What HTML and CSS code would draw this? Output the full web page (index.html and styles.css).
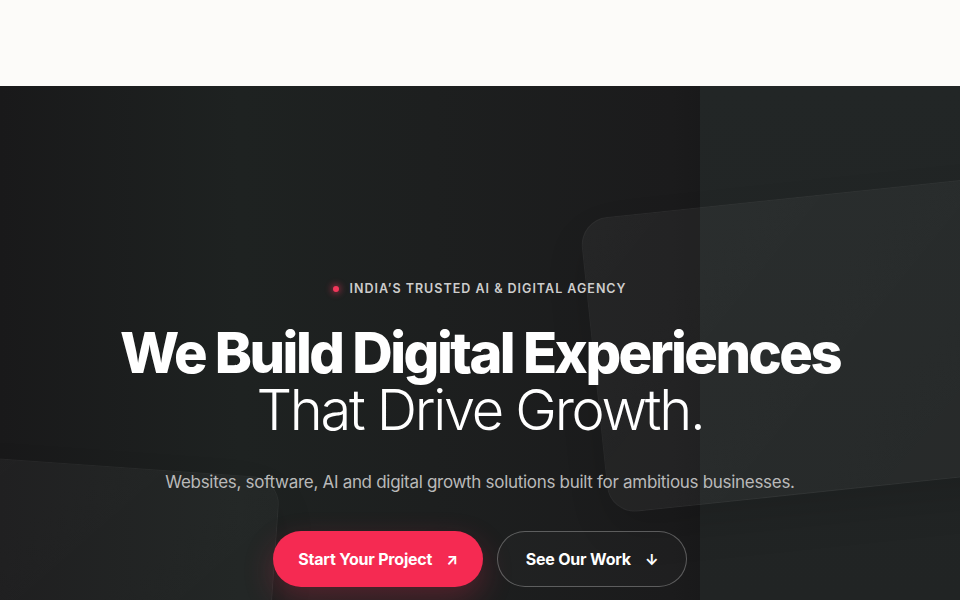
FILE: index.html
```html
<!DOCTYPE html>
<html lang="en">
<head>
<meta charset="utf-8">
<title>Digital Agency</title>
<link rel="stylesheet" href="styles.css">
</head>
<body>
<header class="topbar"></header>
<section class="hero">
  <div class="panel-right"></div>
  <div class="card card-right"></div>
  <div class="card card-left"></div>
  <div class="hero-content">
    <p class="eyebrow"><span class="dot"></span>INDIA’S TRUSTED AI &amp; DIGITAL AGENCY</p>
    <h1 class="title">
      <span class="title-bold">We Build Digital Experiences</span>
      <span class="title-light">That Drive Growth.</span>
    </h1>
    <p class="lead">Websites, software, AI and digital growth solutions built for ambitious businesses.</p>
    <div class="actions">
      <a class="btn btn-primary" href="#">Start Your Project <span class="arrow">↗</span></a>
      <a class="btn btn-outline" href="#">See Our Work <span class="arrow">↓</span></a>
    </div>
  </div>
</section>
</body>
</html>
```
FILE: styles.css
```css
* { box-sizing: border-box; }
html, body { margin: 0; padding: 0; }
body {
  font-family: Inter, "Noto Sans", sans-serif;
  background: #1b1c1d;
  overflow: hidden;
  width: 960px;
  height: 600px;
}
.topbar {
  height: 86px;
  background: #fcfbf9;
}
.hero {
  position: relative;
  height: 514px;
  overflow: hidden;
  background: linear-gradient(90deg, #19191a 0%, #1e2221 25%, #1d1f1f 45%, #1b1b1c 70%, #19191a 73%);
  display: flex;
  flex-direction: column;
  align-items: center;
}
.panel-right {
  position: absolute;
  left: 700px;
  top: 0;
  right: 0;
  bottom: 0;
  background: linear-gradient(180deg, #222626 0%, #212424 100%);
}
.card {
  position: absolute;
  border-radius: 28px;
  background: linear-gradient(135deg, rgba(255,255,255,0.045), rgba(255,255,255,0.025));
  border: 1px solid rgba(255,255,255,0.035);
  box-shadow: 0 20px 40px rgba(0,0,0,0.12);
}
.card-right {
  left: 593px;
  top: 106px;
  width: 520px;
  height: 296px;
  transform: rotate(-6deg);
}
.card-left {
  left: -68px;
  top: 380px;
  width: 340px;
  height: 260px;
  transform: rotate(4deg);
  background: linear-gradient(135deg, rgba(255,255,255,0.035), rgba(255,255,255,0.02));
}
.hero-content {
  position: relative;
  display: flex;
  flex-direction: column;
  align-items: center;
  padding-top: 195px;
  text-align: center;
}
.eyebrow {
  margin: 0;
  display: flex;
  align-items: center;
  gap: 10px;
  font-size: 12.5px;
  font-weight: 600;
  letter-spacing: 1px;
  color: #cdcdcd;
  line-height: 16px;
}
.dot {
  width: 6px;
  height: 6px;
  border-radius: 50%;
  background: #f2375b;
  box-shadow: 0 0 6px 2px rgba(242,55,91,0.45);
}
.title {
  margin: 28px 0 0;
  display: flex;
  flex-direction: column;
  align-items: center;
  color: #ffffff;
  font-size: 56px;
  line-height: 57px;
  letter-spacing: -2.5px;
}
.title-bold { font-weight: 800; }
.title-light { font-weight: 300; letter-spacing: -2.3px; }
.lead {
  margin: 30px 0 0;
  font-size: 17px;
  line-height: 26px;
  color: #b9b9b9;
  letter-spacing: -0.3px;
}
.actions {
  margin-top: 36px;
  display: flex;
  gap: 14px;
}
.btn {
  height: 56px;
  border-radius: 28px;
  display: flex;
  align-items: center;
  justify-content: center;
  gap: 14px;
  font-size: 16px;
  font-weight: 700;
  color: #ffffff;
  text-decoration: none;
  letter-spacing: -0.2px;
}
.btn-primary {
  width: 210px;
  background: #f52a52;
  box-shadow: 0 12px 30px rgba(245,42,82,0.25);
}
.btn-outline {
  width: 190px;
  border: 1px solid rgba(255,255,255,0.28);
  background: rgba(255,255,255,0.02);
}
.arrow { font-size: 15px; font-weight: 700; }
```
